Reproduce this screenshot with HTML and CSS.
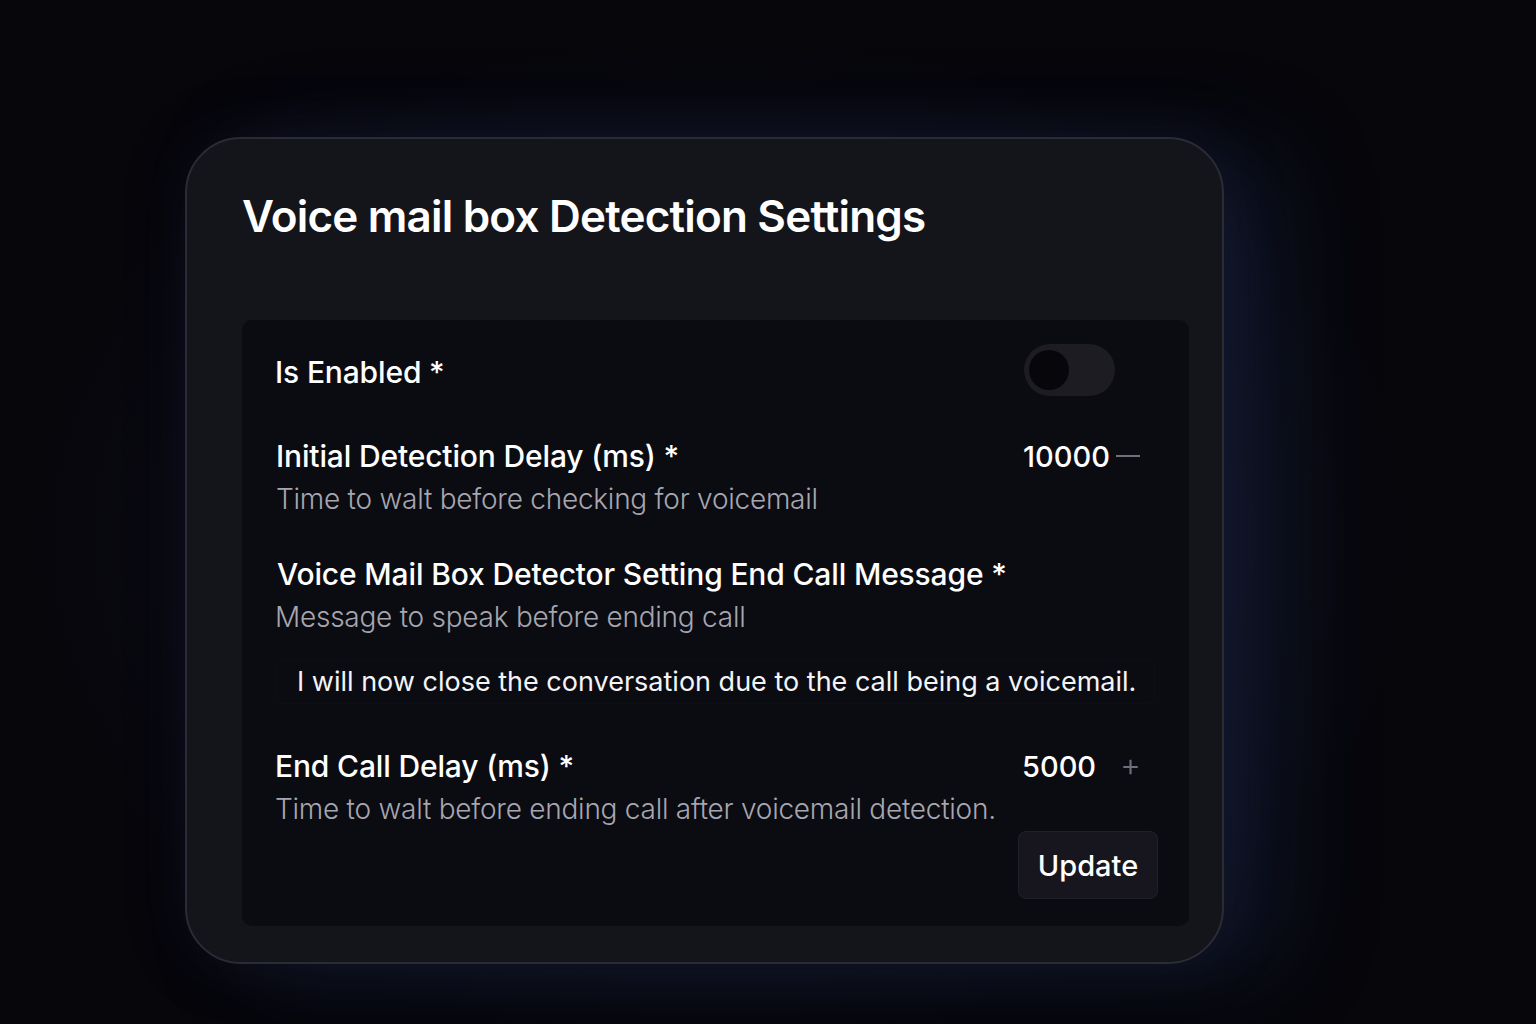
FILE: index.html
```html
<!DOCTYPE html>
<html lang="en">
<head>
<meta charset="utf-8">
<title>Voice mail box Detection Settings</title>
<link rel="stylesheet" href="styles.css">
</head>
<body>
<div class="card">
  <h1 class="title">Voice mail box Detection Settings</h1>
  <div class="panel">
    <div class="row row-toggle">
      <div class="label">Is Enabled *</div>
      <div class="toggle"><span class="knob"></span></div>
    </div>
    <div class="row row-field r2">
      <div class="texts">
        <div class="label">Initial Detection Delay (ms) *</div>
        <div class="desc">Time to walt before checking for voicemail</div>
      </div>
      <div class="num num1"><span class="val">10000</span><span class="minus"></span></div>
    </div>
    <div class="row row-field r3">
      <div class="texts">
        <div class="label">Voice Mail Box Detector Setting End Call Message *</div>
        <div class="desc">Message to speak before ending call</div>
      </div>
    </div>
    <div class="textarea">I will now close the conversation due to the call being a voicemail.</div>
    <div class="row row-field r4">
      <div class="texts">
        <div class="label">End Call Delay (ms) *</div>
        <div class="desc">Time to walt before ending call after voicemail detection.</div>
      </div>
      <div class="num num2"><span class="val">5000</span><span class="plus">+</span></div>
    </div>
    <div class="actions">
      <button class="btn">Update</button>
    </div>
  </div>
</div>
</body>
</html>
```
FILE: styles.css
```css
html, body {
  margin: 0;
  padding: 0;
}
body {
  width: 1536px;
  height: 1024px;
  overflow: hidden;
  background:
    radial-gradient(ellipse 900px 650px at 720px 540px, rgba(20, 20, 36, 0.95), rgba(0,0,0,0) 78%),
    #06060b;
  font-family: Inter, "Noto Sans", sans-serif;
  color: #f4f4f6;
}
.card {
  box-sizing: border-box;
  margin: 137px 0 0 185px;
  width: 1039px;
  height: 827px;
  border-radius: 56px;
  background: #14141b;
  border: 2px solid #2b2b36;
  padding: 50px 33px 0 55px;
  box-shadow:
    60px 10px 90px rgba(28, 42, 78, 0.38),
    0 0 60px rgba(30, 30, 60, 0.3);
}
.title {
  margin: 0;
  font-size: 44px;
  line-height: 55px;
  font-weight: 600;
  letter-spacing: -0.8px;
  color: #ffffff;
}
.panel {
  margin-top: 76px;
  background: #0b0b12;
  border-radius: 10px;
  padding: 24px 31px 26px 33px;
  height: 606px;
  box-sizing: border-box;
}
.row {
  display: flex;
  justify-content: space-between;
}
.row-toggle {
  align-items: center;
  height: 52px;
}
.row-toggle .label {
  padding-top: 5px;
}
.label {
  font-size: 30px;
  line-height: 43px;
  font-weight: 500;
  color: #ffffff;
  letter-spacing: -0.15px;
}
.desc {
  font-size: 28px;
  line-height: 43px;
  font-weight: 300;
  color: #a6a6b0;
  letter-spacing: -0.25px;
}
.toggle {
  width: 91px;
  height: 52px;
  border-radius: 26px;
  background: #1d1c23;
  margin-right: 43px;
  display: flex;
  align-items: center;
  padding-left: 5px;
  box-sizing: border-box;
}
.knob {
  width: 40px;
  height: 40px;
  border-radius: 50%;
  background: #07070b;
}
.r2 { margin-top: 39px; }
.r2 .texts { margin-left: 1px; }
.r3 { margin-top: 32px; }
.r3 .label { margin-left: 2px; }
.r4 { margin-top: 41px; }
.num {
  display: flex;
  align-items: center;
  height: 43px;
  font-size: 29px;
  font-weight: 500;
  color: #ffffff;
}
.num1 { margin-right: 18px; }
.num1 .minus {
  display: block;
  width: 24px;
  height: 2px;
  background: #6f6f78;
  margin-left: 6px;
  margin-top: -2px;
}
.num2 { margin-right: 17px; }
.num2 .plus {
  font-weight: 300;
  font-size: 32px;
  color: #6f6f78;
  margin-left: 24px;
  margin-top: -4px;
}
.textarea {
  margin: 21px 3px 0 0;
  padding: 0 0 0 22px;
  height: 44px;
  line-height: 44px;
  font-size: 27px;
  font-weight: 400;
  color: #f4f4f6;
  border-radius: 6px;
  box-shadow: inset 0 0 0 1px rgba(255, 255, 255, 0.015);
}
.actions {
  display: flex;
  justify-content: flex-end;
  margin-top: 0;
}
.btn {
  width: 140px;
  height: 68px;
  border-radius: 8px;
  background: #17161e;
  border: 1px solid #212029;
  color: #ffffff;
  font-family: Inter, "Noto Sans", sans-serif;
  font-size: 29px;
  font-weight: 500;
  padding: 0;
  margin: 0;
}
```
